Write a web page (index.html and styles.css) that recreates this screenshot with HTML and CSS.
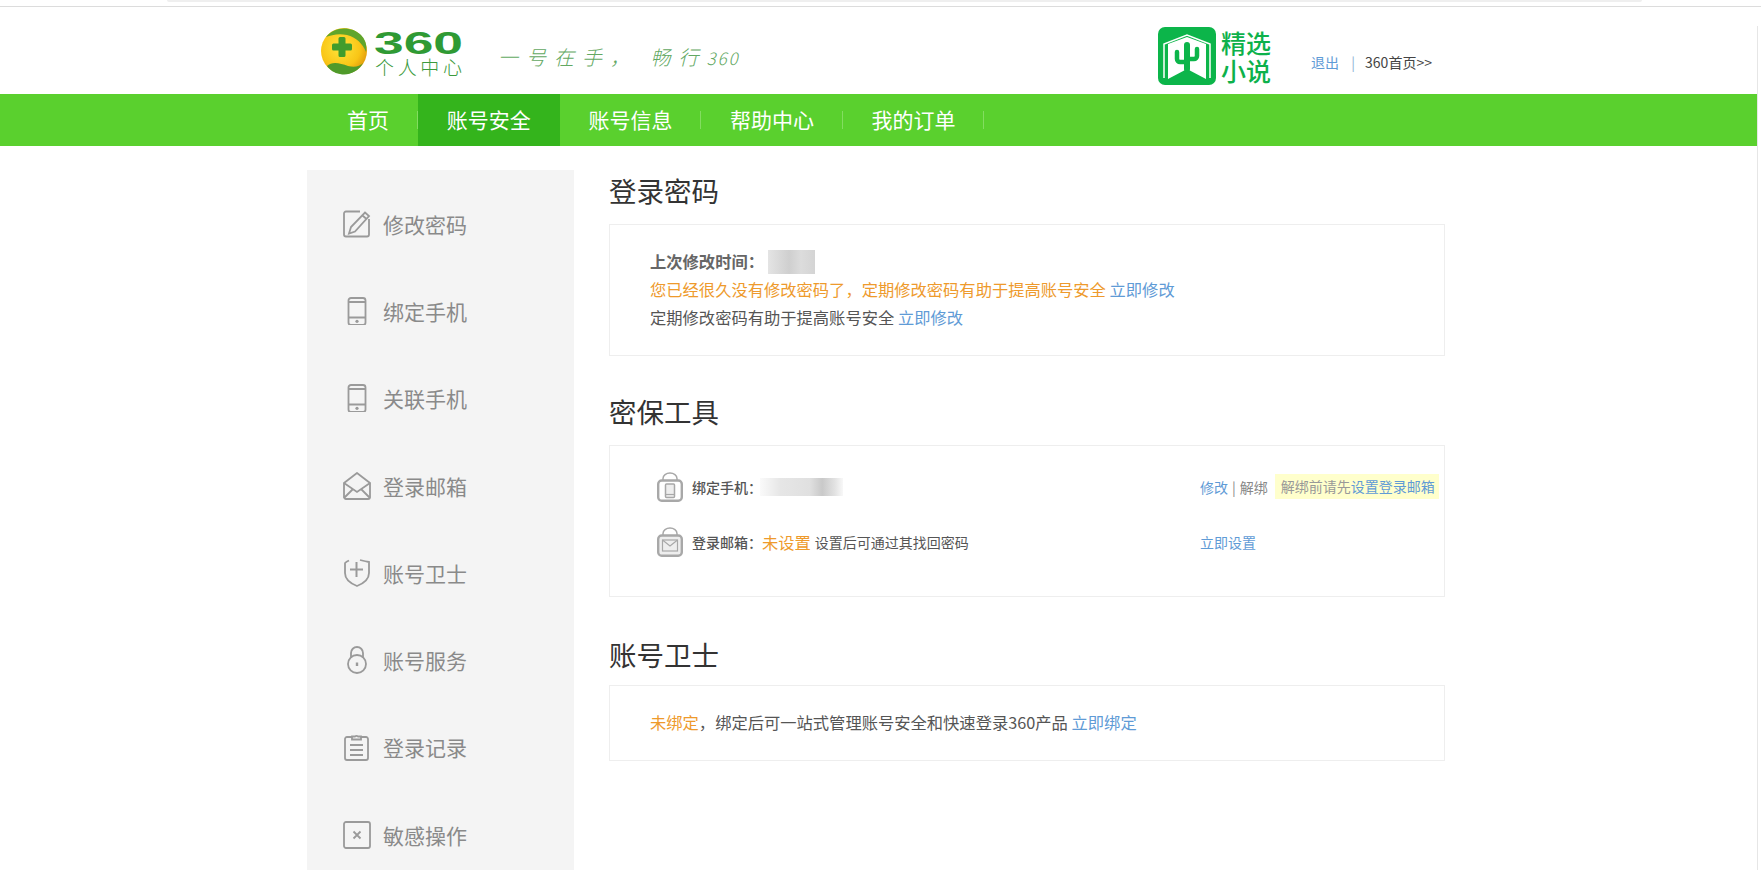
FILE: index.html
```html
<!DOCTYPE html>
<html lang="zh-CN">
<head>
  <meta charset="UTF-8">
  <title>360个人中心</title>
  <link rel="stylesheet" href="styles.css">
</head>
<body>

  <div class="top-strip"><div class="top-pill"></div></div>

  <div class="header">
    <div class="wrap header-inner">
      <svg class="logo" width="146" height="54" viewBox="0 0 146 54">
        <defs>
          <radialGradient id="ball" cx="42%" cy="42%" r="62%">
            <stop offset="0" stop-color="#ffe53c"/>
            <stop offset="0.7" stop-color="#f9c516"/>
            <stop offset="1" stop-color="#e29c0c"/>
          </radialGradient>
        </defs>
        <circle cx="24" cy="25" r="23" fill="url(#ball)"/>
        <path d="M6 11C13 1 31 -1 41 9C46 14 47 20 46 26C43 18 36 11 27 9C19 7 11 9 6 11Z" fill="#5fa52c"/>
        <path d="M7 40C12 35 20 37 28 40C35 42 40 40 43 37C38 46 28 50 20 48C14 47 10 44 7 40Z" fill="#4f9a2a"/>
        <path d="M18.500 12.500a1.500 1.500 0 0 1 1.500-1.500h4a1.500 1.500 0 0 1 1.500 1.500v5h5a1.500 1.500 0 0 1 1.500 1.500v4a1.500 1.500 0 0 1-1.500 1.500h-5v5a1.500 1.500 0 0 1-1.500 1.500h-4a1.500 1.500 0 0 1-1.500-1.500v-5h-5a1.500 1.500 0 0 1-1.500-1.500v-4a1.500 1.500 0 0 1 1.500-1.500h5Z" fill="#419c2c"/>
        <text class="logo-num" x="54" y="28" textLength="89" lengthAdjust="spacingAndGlyphs">360</text>
        <text class="logo-sub" x="55" y="49" textLength="87" lengthAdjust="spacing">个人中心</text>
      </svg>
      <div class="slogan">一号在手， 畅行<span class="slogan-num">360</span></div>
      <div class="novel">
        <svg width="58" height="58" viewBox="0 0 58 58">
          <rect width="58" height="58" rx="7" fill="#0cb54a"/>
          <path d="M6 51V17L29 8L52 17V51" fill="none" stroke="#fff" stroke-width="1.500"/>
          <path d="M10 52V17L29 10L48 17V52L29 42Z" fill="#fff"/>
          <path d="M29 18V42" fill="none" stroke="#0cb54a" stroke-width="6" stroke-linecap="round"/>
          <path d="M19 25v7a3 3 0 0 0 3 3h7M39 22v7a3 3 0 0 1-3 3h-7" fill="none" stroke="#0cb54a" stroke-width="4.500" stroke-linecap="round"/>
        </svg>
        <div class="novel-text">精选<br>小说</div>
      </div>
      <div class="top-links">
        <a class="link">退出</a>
        <span class="top-sep">|</span>
        <a class="home-link">360首页&gt;&gt;</a>
      </div>
    </div>
  </div>

  <div class="nav">
    <div class="wrap nav-inner">
      <a class="nav-item nav-first">首页</a>
      <a class="nav-item active">账号安全</a>
      <a class="nav-item">账号信息</a>
      <a class="nav-item">帮助中心</a>
      <a class="nav-item">我的订单</a>
    </div>
  </div>

  <div class="wrap page">
    <div class="side">
      <div class="side-item">
        <svg class="side-icon" width="28" height="28" viewBox="0 0 28 28" fill="none" stroke="#9a9a9a" stroke-width="1.800">
          <path d="M17 1.500H3a2 2 0 0 0-2 2v21a2 2 0 0 0 2 2h21a2 2 0 0 0 2-2V9"/>
          <path d="M22 2.500l4 3.500L12 21.500l-6 2 2-6.500ZM19.500 5.500l4 3.500"/>
        </svg>
        <span>修改密码</span>
      </div>
      <div class="side-item">
        <svg class="side-icon" width="28" height="28" viewBox="0 0 28 28" fill="none" stroke="#9a9a9a" stroke-width="1.800">
          <rect x="5.500" y="1" width="17" height="27" rx="2.500"/>
          <path d="M5.500 5h17M5.500 20.500h17"/>
          <circle cx="14" cy="24.300" r="1.600" fill="#9a9a9a" stroke="none"/>
        </svg>
        <span>绑定手机</span>
      </div>
      <div class="side-item">
        <svg class="side-icon" width="28" height="28" viewBox="0 0 28 28" fill="none" stroke="#9a9a9a" stroke-width="1.800">
          <rect x="5.500" y="1" width="17" height="27" rx="2.500"/>
          <path d="M5.500 5h17M5.500 20.500h17"/>
          <circle cx="14" cy="24.300" r="1.600" fill="#9a9a9a" stroke="none"/>
        </svg>
        <span>关联手机</span>
      </div>
      <div class="side-item">
        <svg class="side-icon" width="28" height="28" viewBox="0 0 28 28" fill="none" stroke="#9a9a9a" stroke-width="1.800">
          <path d="M1 11L14 1l13 10v14a2 2 0 0 1-2 2H3a2 2 0 0 1-2-2Z"/>
          <path d="M1 11l13 9 13-9M1 26l9-9M27 26l-9-9"/>
        </svg>
        <span>登录邮箱</span>
      </div>
      <div class="side-item">
        <svg class="side-icon" width="28" height="28" viewBox="0 0 28 28" fill="none" stroke="#9a9a9a" stroke-width="1.800">
          <path d="M6 1.500C3 3 2 3.500 2 4v10c0 7 7 11 12 13 5-2 12-6 12-13V3c-3-.500-7-1.500-9-2"/>
          <path d="M13.500 3v15M7 10.500h13" stroke-width="2"/>
        </svg>
        <span>账号卫士</span>
      </div>
      <div class="side-item">
        <svg class="side-icon" width="28" height="28" viewBox="0 0 28 28" fill="none" stroke="#9a9a9a" stroke-width="1.800">
          <path d="M8 12V7a6 6 0 0 1 12 0v5"/>
          <circle cx="14" cy="18" r="9"/>
          <path d="M14 16.500v3.500" stroke-width="2.400"/>
        </svg>
        <span>账号服务</span>
      </div>
      <div class="side-item">
        <svg class="side-icon" width="28" height="28" viewBox="0 0 28 28" fill="none" stroke="#9a9a9a" stroke-width="1.800">
          <path d="M9 4H4a2 2 0 0 0-2 2v19a2 2 0 0 0 2 2h19a2 2 0 0 0 2-2V6a2 2 0 0 0-2-2h-5"/>
          <path d="M9 6.500V3.500h3a2 2 0 0 1 3 0h3v3Z"/>
          <path d="M7 12h13M7 17h13M7 22h13"/>
        </svg>
        <span>登录记录</span>
      </div>
      <div class="side-item">
        <svg class="side-icon" width="28" height="28" viewBox="0 0 28 28" fill="none" stroke="#9a9a9a" stroke-width="1.800">
          <rect x="1" y="1" width="26" height="26" rx="2"/>
          <path d="M10.500 10.500l7 7M17.500 10.500l-7 7"/>
        </svg>
        <span>敏感操作</span>
      </div>
    </div>

    <div class="main">
      <h2>登录密码</h2>
      <div class="box box-pass">
        <p class="strong">上次修改时间：<span class="blur-date"></span></p>
        <p class="warn">您已经很久没有修改密码了，定期修改密码有助于提高账号安全 <a class="link">立即修改</a></p>
        <p>定期修改密码有助于提高账号安全 <a class="link">立即修改</a></p>
      </div>

      <h2>密保工具</h2>
      <div class="box box-tools">
        <div class="tool-row">
          <svg class="lock" width="26" height="30" viewBox="0 0 26 30" fill="none" stroke="#a8a8a8">
            <path d="M6 9V6.500a7 5.500 0 0 1 14 0V8" stroke-width="1.500"/>
            <rect x="1.200" y="8.500" width="23.600" height="20.300" rx="3.500" stroke-width="2.400"/>
            <rect x="8.500" y="12" width="9" height="13.500" rx="1" fill="#eee" stroke-width="1.500"/>
            <path d="M9 22.500h8" stroke-width="1.200"/>
          </svg>
          <span class="tool-label">绑定手机：</span>
          <span class="blur-phone"></span>
          <div class="tool-actions">
            <a class="link">修改</a> <span class="bar">|</span> <span class="muted">解绑</span>
            <span class="tip">解绑前请先<a class="link">设置登录邮箱</a></span>
          </div>
        </div>
        <div class="tool-row">
          <svg class="lock" width="26" height="30" viewBox="0 0 26 30" fill="none" stroke="#a8a8a8">
            <path d="M6 9V6.500a7 5.500 0 0 1 14 0V8" stroke-width="1.500"/>
            <rect x="1.200" y="8.500" width="23.600" height="20.300" rx="3.500" fill="#eee" stroke-width="2.400"/>
            <rect x="5.500" y="13" width="15" height="11" stroke-width="1.200"/>
            <path d="M5.500 13l7.500 6 7.500-6" stroke-width="1.200"/>
          </svg>
          <span class="tool-label">登录邮箱：</span>
          <span class="warn big">未设置</span>
          <span class="tool-note">设置后可通过其找回密码</span>
          <div class="tool-actions">
            <a class="link">立即设置</a>
          </div>
        </div>
      </div>

      <h2>账号卫士</h2>
      <div class="box box-guard">
        <p><span class="warn">未绑定</span>，绑定后可一站式管理账号安全和快速登录360产品 <a class="link">立即绑定</a></p>
      </div>
    </div>
  </div>

</body>
</html>
```

FILE: styles.css
```css
html, body {
  height: 870px;
  overflow: hidden;
}

body {
  margin: 0;
  font-family: "Noto Sans CJK SC", "Liberation Sans", sans-serif;
  background-color: #fff;
  color: #555;
}

/* thin scrollbar edge of the window */
body::after {
  content: "";
  position: fixed;
  top: 26px;
  bottom: 0;
  left: 1757px;
  width: 1px;
  background-color: #e6e6e6;
}

h2, p {
  margin: 0;
}

a {
  text-decoration: none;
}

.top-strip {
  height: 6px;
  background-color: #fff;
  border-bottom: 1px solid #dcdcdc;
}

.top-pill {
  width: 1475px;
  height: 2px;
  margin-left: 167px;
  background-color: #efefef;
  border-radius: 0 0 6px 6px;
}

.wrap {
  width: 1143px;
  margin-left: 307px;
}

.header {
  height: 87px;
}

.header-inner {
  display: flex;
  align-items: flex-start;
  height: 87px;
  padding-left: 13px;
  box-sizing: border-box;
}

.logo {
  margin-top: 19px;
}

.logo-num {
  font-family: "Liberation Sans", sans-serif;
  font-weight: 700;
  font-size: 31px;
  fill: #2f9a34;
}

.logo-sub {
  font-size: 19px;
  font-weight: 300;
  fill: #3c9a3c;
}

.slogan {
  margin: 35px 0 0 32px;
  width: 360px;
  font-size: 20px;
  line-height: 30px;
  letter-spacing: 8px;
  font-weight: 300;
  font-style: italic;
  color: #62a862;
  white-space: nowrap;
}

.slogan-num {
  font-size: 17px;
  letter-spacing: 2px;
}

.novel {
  display: flex;
  align-items: center;
  margin: 20px 0 0 300px;
}

.novel-text {
  margin-left: 5px;
  font-size: 25px;
  line-height: 28px;
  font-weight: 500;
  color: #0db14b;
}

.top-links {
  margin: 45px 0 0 40px;
  font-size: 14px;
  line-height: 20px;
  white-space: nowrap;
}

.top-sep {
  margin: 0 7px 0 9px;
  color: #8fb3d4;
}

.home-link {
  color: #444;
}

.link {
  color: #5f9bd6;
}

.nav {
  width: 1757px;
  height: 52px;
  background-color: #5ad02e;
}

.nav-inner {
  display: flex;
}

.nav-item {
  position: relative;
  width: 141.600px;
  height: 52px;
  line-height: 50px;
  text-align: center;
  font-size: 21px;
  color: #fff;
}

.nav-item::after {
  content: "";
  position: absolute;
  right: 0;
  top: 17px;
  height: 18px;
  border-right: 1px solid #83dd60;
}

.nav-first {
  width: 111px;
  padding-left: 11px;
  box-sizing: border-box;
}

.nav-item.active {
  background-color: #34b41c;
}

.nav-item.active::after {
  display: none;
}

.page {
  display: flex;
  align-items: flex-start;
  padding-top: 24px;
}

.side {
  width: 267px;
  height: 700px;
  padding: 10px 0 0 36px;
  box-sizing: border-box;
  background-color: #f4f4f4;
}

.side-item {
  display: flex;
  align-items: center;
  height: 87.300px;
  font-size: 21px;
  color: #8a8a8a;
}

.side-icon {
  margin-right: 12px;
}

.main {
  width: 836px;
  margin-left: 35px;
}

h2 {
  font-size: 27.500px;
  line-height: 40px;
  font-weight: 400;
  color: #333;
}

.box {
  margin-top: 14px;
  border: 1px solid #eee;
  box-sizing: border-box;
  font-size: 16.300px;
  line-height: 28px;
}

.box-pass {
  height: 132px;
  padding: 22px 40px 0;
  margin-bottom: 35px;
}

.strong {
  font-weight: 700;
  color: #666;
}

.warn {
  color: #ee9a2c;
}

.blur-date {
  display: inline-block;
  width: 47px;
  height: 24px;
  margin-left: 4px;
  vertical-align: -6px;
  background: linear-gradient(90deg, #e4e4e4, #cfcfcf 45%, #dcdcdc 70%, #d4d4d4);
}

.box-tools {
  height: 152px;
  padding: 13px 0 0 47px;
  margin-bottom: 37px;
  font-size: 14px;
}

.tool-row {
  display: flex;
  align-items: center;
  height: 55px;
}

.lock {
  flex: none;
  margin-right: 9px;
}

.tool-label {
  flex: none;
  width: 70px;
  font-weight: 500;
  white-space: nowrap;
}

.blur-phone {
  flex: none;
  width: 83px;
  height: 18px;
  margin-left: -2px;
  background: linear-gradient(90deg, #fafafa, #e6e6e6 25%, #e0e0e0 60%, #c9c9c9 75%, #e2e2e2 90%, #f8f8f8);
}

.big {
  font-size: 16.300px;
  margin-right: 4px;
}

.tool-actions {
  display: flex;
  align-items: center;
  flex: none;
  margin-left: auto;
  width: 244px;
  white-space: nowrap;
}

.bar {
  margin: 0 4px;
  color: #8a8a8a;
}

.muted {
  color: #888;
}

.tip {
  margin-left: 7px;
  padding: 0 4px 0 6px;
  line-height: 25px;
  background-color: #ffffcc;
  color: #999;
}

.box-guard {
  height: 76px;
  margin-top: 11px;
  padding: 22px 40px 0;
}
```
